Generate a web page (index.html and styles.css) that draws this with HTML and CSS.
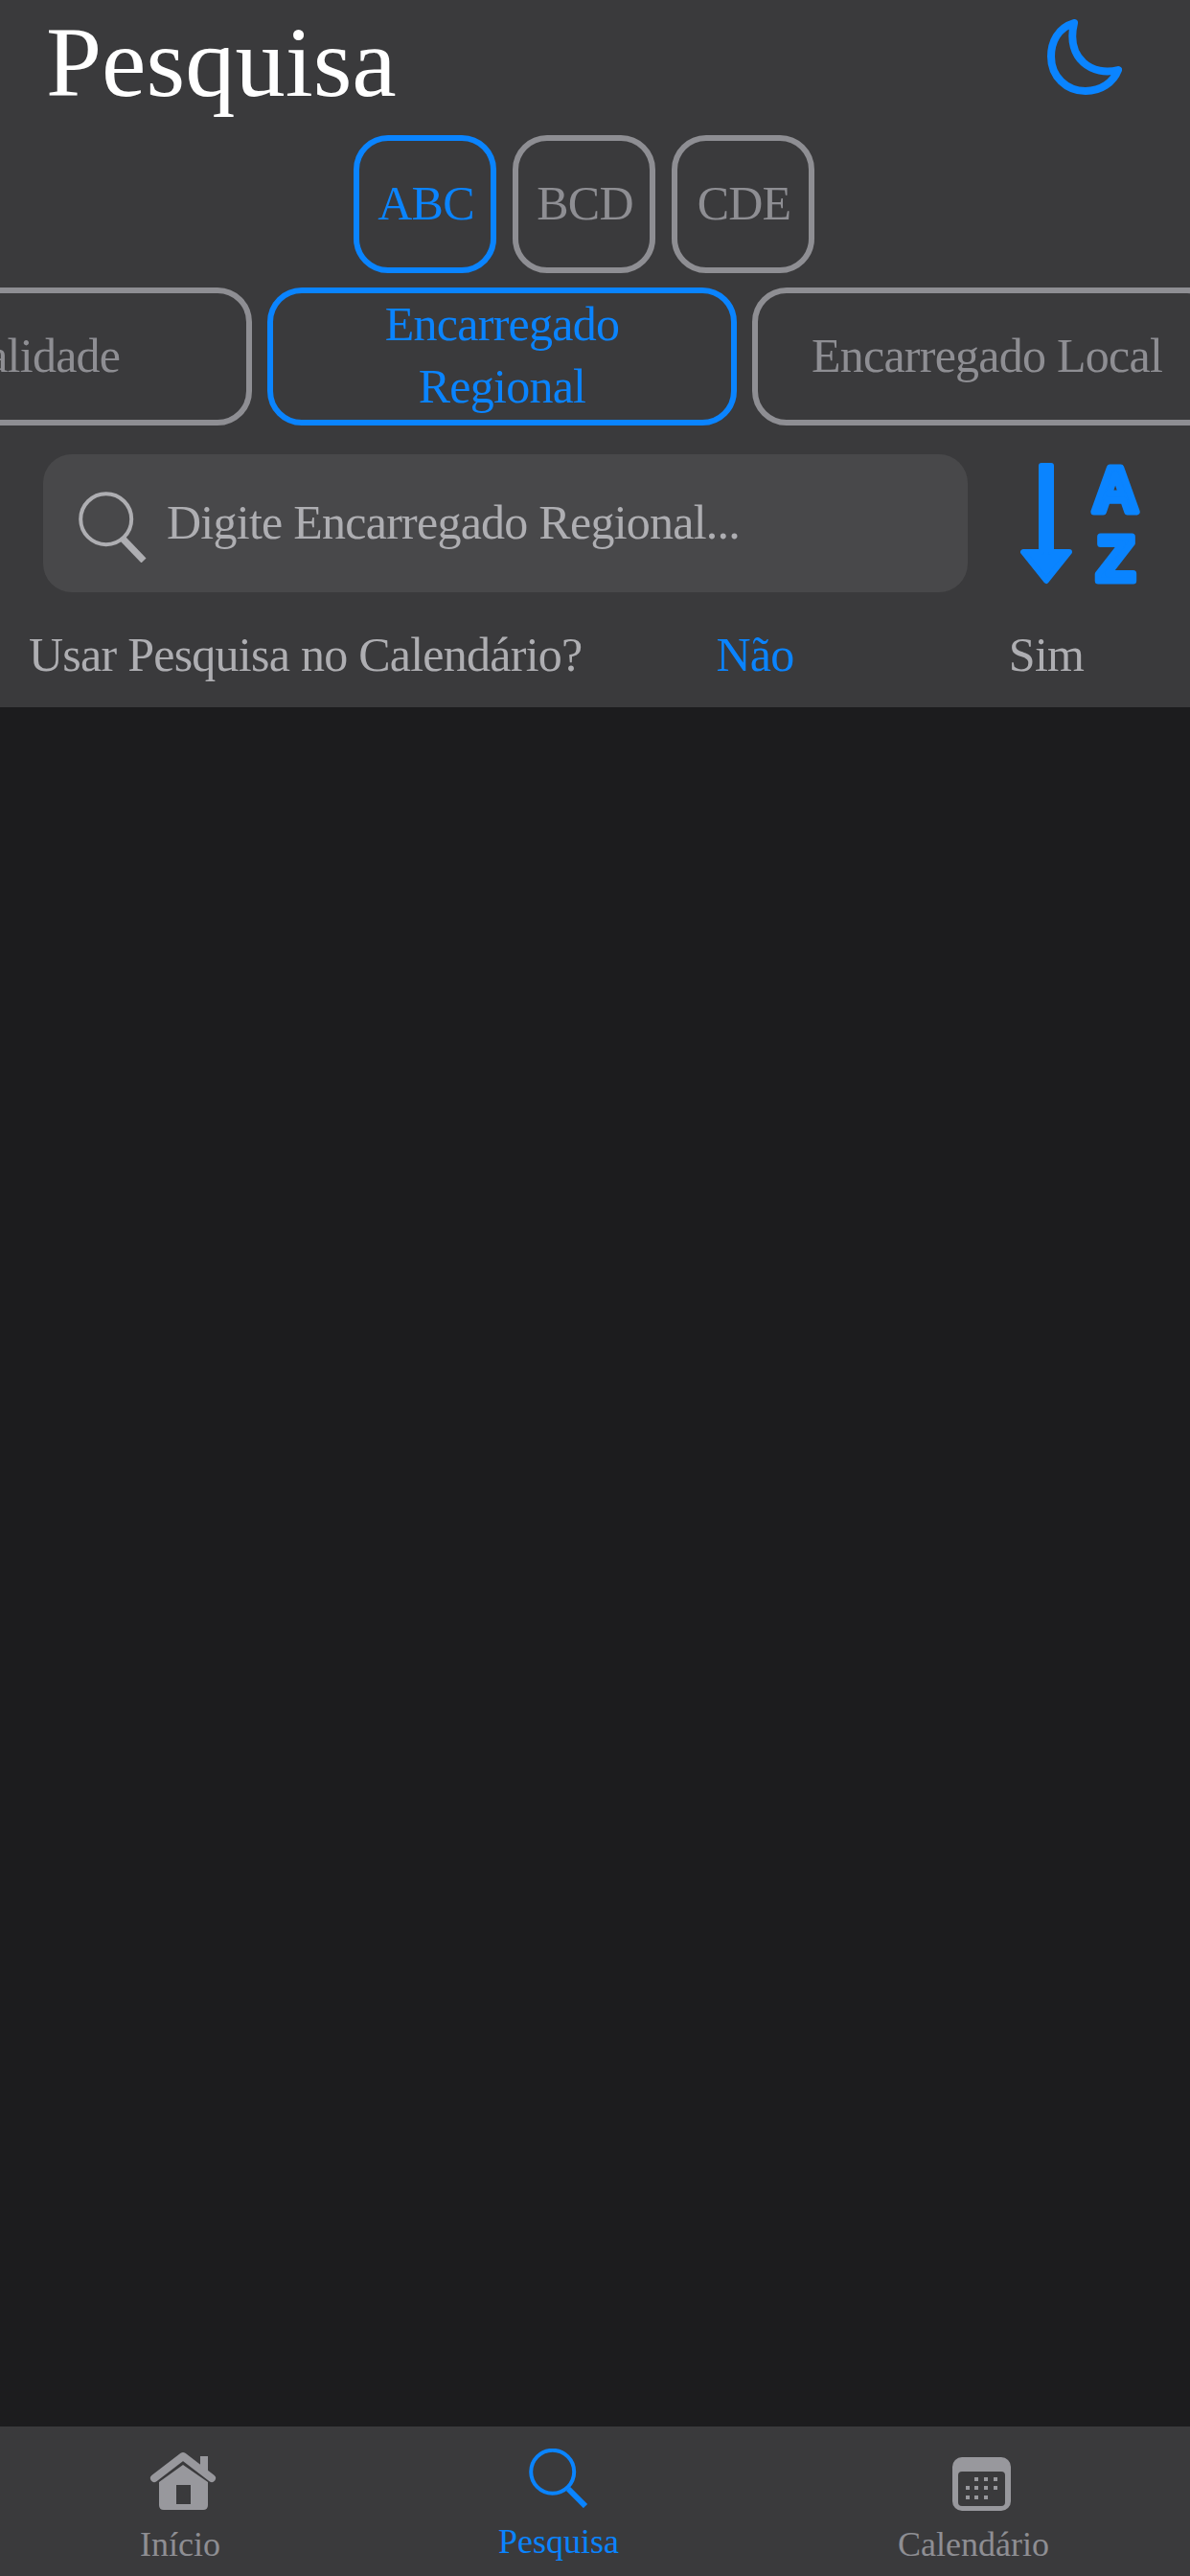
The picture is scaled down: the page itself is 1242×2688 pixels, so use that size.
FILE: index.html
```html
<!DOCTYPE html>
<html lang="pt-BR">
<head>
  <meta charset="UTF-8" />
  <meta name="viewport" content="width=device-width, initial-scale=1.0"/>
  <title>Pesquisa</title>
  <link rel="stylesheet" href="styles.css">
</head>
<body>

<header class="top-panel">
  <div class="title-row">
    <h1>Pesquisa</h1>
    <svg class="moon-icon" viewBox="0 0 78 79" width="78" height="79">
      <path d="M28 4 C11 9 4 24 4 39 C4 60 20 75 40 75 C56 75 69 66 74 53 C48 60 19 42 28 4 Z" />
    </svg>
  </div>

  <div class="sort-modes">
    <button class="chip active">ABC</button>
    <button class="chip">BCD</button>
    <button class="chip">CDE</button>
  </div>

  <div class="pill-row">
    <button class="pill">Localidade</button>
    <button class="pill active">Encarregado Regional</button>
    <button class="pill">Encarregado Local</button>
  </div>

  <div class="search-row">
    <div class="search-box">
      <svg class="search-icon" viewBox="0 0 71 74" width="71" height="74">
        <circle cx="28.7" cy="28.7" r="26.5" />
        <line class="handle" x1="46" y1="49" x2="68" y2="72" />
      </svg>
      <span>Digite Encarregado Regional...</span>
    </div>
    <svg class="sort-icon" viewBox="0 -16 126 158" width="126" height="158">
      <path class="arrow" d="M22 3 H32 V93 H51 L27 123 L3 93 H22 Z" />
      <text class="sort-letter" x="99" y="50.5">A</text>
      <text class="sort-letter" x="99.5" y="122.5">Z</text>
    </svg>
  </div>

  <div class="calendar-toggle">
    <span class="toggle-label">Usar Pesquisa no Calendário?</span>
    <div class="toggle-options">
      <span class="option active">Não</span>
      <span class="option">Sim</span>
    </div>
  </div>
</header>

<main class="results"></main>

<nav class="tab-bar">
  <div class="tab">
    <svg class="tab-icon icon-home" viewBox="0 0 70 65" width="70" height="65">
      <path class="roof" d="M5 31 L35 8 L65 31" />
      <rect x="53" y="8" width="8" height="18" />
      <path fill-rule="evenodd" d="M10 35 L35 17 L61 35 V59 Q61 64 56 64 H15 Q10 64 10 59 Z M28 38 V58 H43 V38 Z" />
    </svg>
    <span>Início</span>
  </div>
  <div class="tab active">
    <svg class="tab-icon icon-search" viewBox="0 0 62 62" width="62" height="62">
      <circle cx="24.7" cy="24.3" r="22.5" />
      <line class="handle" x1="41" y1="42" x2="59" y2="60" />
    </svg>
    <span>Pesquisa</span>
  </div>
  <div class="tab">
    <svg class="tab-icon icon-calendar" viewBox="0 -9 61 65" width="61" height="65">
      <rect class="cal-body" x="0" y="0" width="61" height="56" rx="10" />
      <rect class="cal-face" x="6" y="15" width="49" height="36" rx="4" />
      <g class="cal-dots">
        <rect x="23" y="21" width="4" height="4" />
        <rect x="33" y="21" width="4" height="4" />
        <rect x="43" y="21" width="4" height="4" />
        <rect x="14" y="30" width="4" height="4" />
        <rect x="23" y="30" width="4" height="4" />
        <rect x="33" y="30" width="4" height="4" />
        <rect x="43" y="30" width="4" height="4" />
        <rect x="14" y="40" width="4" height="4" />
        <rect x="23" y="40" width="4" height="4" />
        <rect x="33" y="40" width="4" height="4" />
      </g>
    </svg>
    <span>Calendário</span>
  </div>
</nav>

</body>
</html>
```

FILE: styles.css
```css
* {
  box-sizing: border-box;
}

html, body {
  height: 100%;
}

body {
  margin: 0;
  display: flex;
  flex-direction: column;
  height: 2688px;
  overflow: hidden;
  background: #1c1c1e;
  font-family: "Liberation Serif", "Times New Roman", serif;
  font-size: 50px;
  letter-spacing: -0.75px;
  color: #8e8e93;
}

.top-panel {
  background: #3a3a3c;
  height: 738px;
  flex-shrink: 0;
  overflow: hidden;
}

.title-row {
  display: flex;
  justify-content: space-between;
  align-items: center;
  height: 118px;
  padding: 0 71px 0 48px;
  margin-bottom: 23px;
}

.title-row h1 {
  margin: 0;
  padding-top: 12px;
  font-size: 104.5px;
  font-weight: normal;
  line-height: 112px;
  letter-spacing: 0;
  color: #fff;
}

.moon-icon path {
  fill: none;
  stroke: #0a84ff;
  stroke-width: 8;
  stroke-linejoin: round;
}

.sort-modes {
  display: flex;
  justify-content: center;
  gap: 17px;
  padding-right: 24px;
  margin-bottom: 15px;
}

button {
  font-family: inherit;
  font-size: 50px;
  letter-spacing: inherit;
  color: #8e8e93;
  background: transparent;
  border: 6px solid #8e8e93;
  padding: 0;
  cursor: pointer;
}

button.active {
  color: #0a84ff;
  border-color: #0a84ff;
}

.chip {
  width: 149px;
  height: 144px;
  padding: 0 0 3px 3px;
  border-radius: 36px;
}

.pill-row {
  display: flex;
  gap: 16px;
  margin-left: -227px;
  margin-bottom: 30px;
}

.pill {
  flex-shrink: 0;
  width: 490px;
  height: 144px;
  padding: 0 32px 2px;
  border-radius: 36px;
  line-height: 65px;
}

.search-row {
  display: flex;
  align-items: center;
  gap: 55px;
  padding-left: 45px;
  height: 144px;
}

.search-box {
  display: flex;
  align-items: center;
  gap: 21px;
  width: 965px;
  height: 144px;
  padding-left: 37px;
  background: #48484a;
  border-radius: 30px;
  color: #aeaeb2;
}

.search-box span {
  padding-bottom: 3px;
}

.search-icon {
  margin-top: 8px;
}

.search-icon circle,
.search-icon line {
  fill: none;
  stroke: #aeaeb2;
  stroke-width: 4;
}

.search-icon .handle {
  stroke-width: 7;
}

.arrow {
  fill: #0a84ff;
  stroke: #0a84ff;
  stroke-width: 6;
  stroke-linejoin: round;
}

.sort-letter {
  font-family: "Liberation Sans", sans-serif;
  font-weight: bold;
  font-size: 66px;
  letter-spacing: 0;
  text-anchor: middle;
  fill: #0a84ff;
  stroke: #0a84ff;
  stroke-width: 7;
  stroke-linejoin: round;
}

.calendar-toggle {
  display: flex;
  align-items: center;
  height: 120px;
  padding: 9px 100px 0 30px;
  color: #aeaeb2;
}

.toggle-label {
  flex: 1;
}

.toggle-options {
  display: flex;
  gap: 204px;
}

.option {
  width: 100px;
  text-align: center;
}

.option.active {
  color: #0a84ff;
}

.results {
  flex: 1;
}

.tab-bar {
  display: grid;
  grid-template-columns: 376px 414px 452px;
  height: 156px;
  flex-shrink: 0;
  background: #3a3a3c;
  font-size: 36px;
  letter-spacing: 0;
}

.tab {
  display: flex;
  flex-direction: column;
  align-items: center;
  padding-top: 23px;
}

.tab span {
  margin-top: 15px;
  line-height: 40px;
}

.tab.active {
  color: #0a84ff;
}

.tab-icon {
  fill: #98989d;
}

.icon-home {
  margin-left: 6px;
}

.icon-calendar {
  margin-left: 17px;
}

.icon-home .roof {
  fill: none;
  stroke: #98989d;
  stroke-width: 8;
  stroke-linecap: round;
  stroke-linejoin: round;
}

.icon-search circle,
.icon-search line {
  fill: none;
  stroke: #0a84ff;
  stroke-width: 4;
}

.icon-search .handle {
  stroke-width: 6;
}

.cal-face {
  fill: #3a3a3c;
}

.cal-dots {
  fill: #98989d;
}
```
